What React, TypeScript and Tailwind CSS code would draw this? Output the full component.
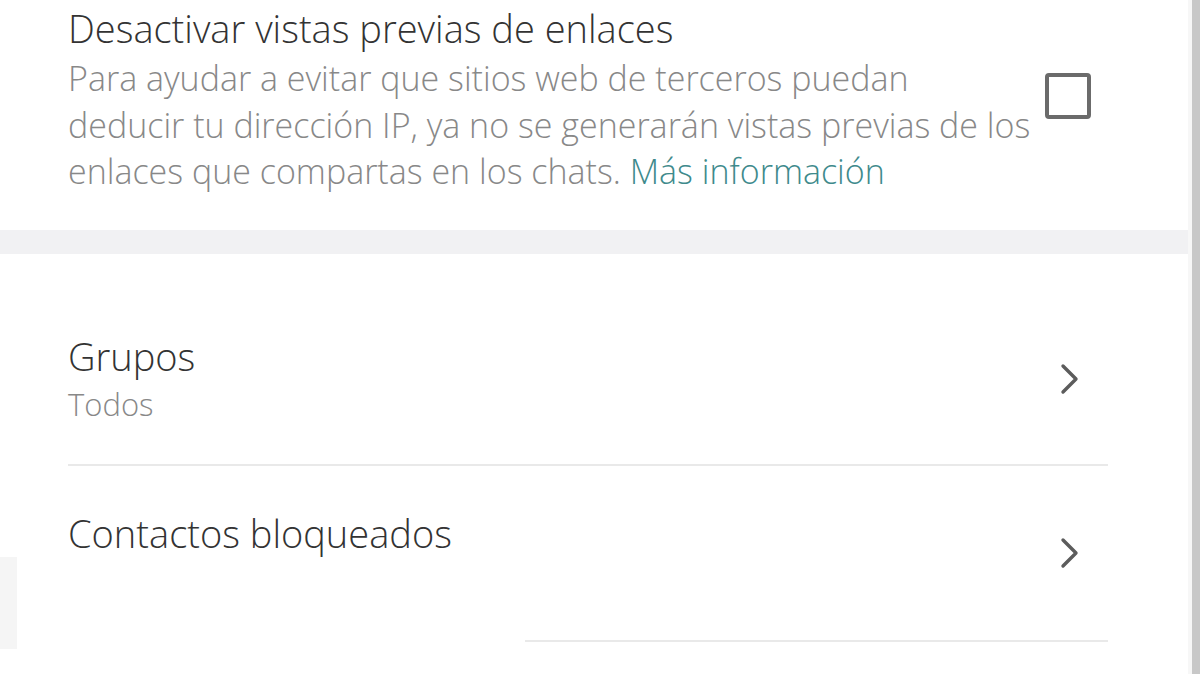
const font = {fontFamily: '"Open Sans", "Noto Sans", sans-serif'};

function Chevron() {
  return (
    <svg width="20" height="32" viewBox="0 0 20 32" fill="none">
      <polyline points="3,3 16,16 3,29" stroke="#5c5c5c" strokeWidth="3.4" strokeLinecap="round" strokeLinejoin="round" />
    </svg>
  );
}

function Row({title, sub, last}: {title: string; sub?: string; last?: boolean}) {
  return (
    <>
      <div className={`flex ${sub ? "items-center h-[170px]" : "items-start h-[174px]"}`}>
        <div className={`flex-1 ${sub ? "" : "pt-[47px]"}`}>
          <div className="text-[38px] leading-[40px] font-light text-[#333]">{title}</div>
          {sub && <div className="text-[31px] leading-[36px] font-light text-[#888] mt-[10px]">{sub}</div>}
        </div>
        <div className={`w-[40px] flex justify-center mr-[98px] ${sub ? "" : "self-center"}`}>
          <Chevron />
        </div>
      </div>
      {/* divider, the last one starts further in */}
      <div className={`h-[2px] bg-[#e9e9e9] mr-[80px] ${last ? "ml-[457px]" : ""}`}></div>
    </>
  );
}

export default function App() {
  return (
    <div className="w-[1200px] h-[674px] bg-white flex overflow-hidden relative" style={font}>
      <div className="flex-1 flex flex-col">
        {/* link previews setting */}
        <div className="flex items-center pl-[68px] pt-[6px] h-[230px]">
          <div className="flex-1 self-start">
            <div className="text-[38px] leading-[44px] font-light text-[#333]">
              Desactivar vistas previas de enlaces
            </div>
            <p className="text-[34px] leading-[46.5px] font-light text-[#888] mt-[5px] whitespace-nowrap">
              Para ayudar a evitar que sitios web de terceros puedan
              <br />
              deducir tu dirección IP, ya no se generarán vistas previas de los
              <br />
              enlaces que compartas en los chats.{" "}
              <span className="text-[#3e8a8c]">Más información</span>
            </p>
          </div>
          <div className="w-[46px] h-[46px] border-[4px] border-[#6b6b6b] rounded-[4px] mr-[97px] mb-[44px]"></div>
        </div>

        <div className="h-[24px] bg-[#f1f1f3]"></div>

        <div className="pt-[40px] pl-[68px]">
          <Row title="Grupos" sub="Todos" />
        </div>
        <div className="pl-[68px]">
          <Row title="Contactos bloqueados" last />
        </div>
        <div className="flex-1"></div>
      </div>

      {/* scrollbar edge */}
      <div className="w-[4px] bg-[#f7f7f7]"></div>
      <div className="w-[8px] bg-[#c8c8c8]"></div>

      <div className="absolute left-0 top-[557px] w-[17px] h-[92px] bg-[#f5f5f5]"></div>
    </div>
  );
}
